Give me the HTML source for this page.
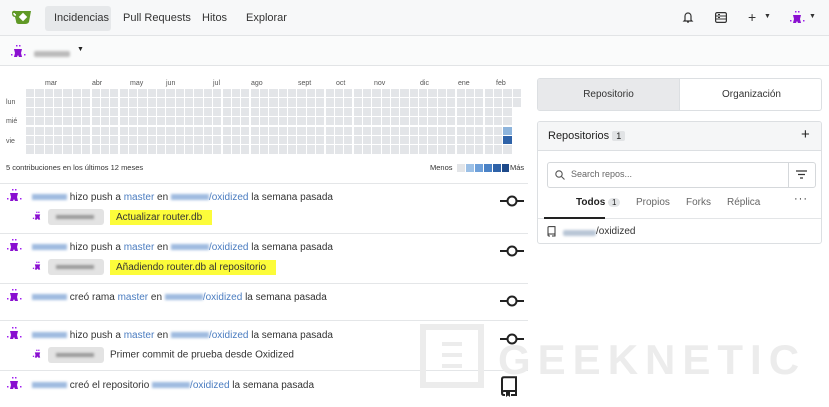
<!DOCTYPE html>
<html><head><meta charset="utf-8">
<style>
*{box-sizing:border-box;margin:0;padding:0}
body{width:829px;height:407px;overflow:hidden;background:#fff;font-family:"Liberation Sans",sans-serif;font-size:11px;color:#222;position:relative}
.nav{position:absolute;left:0;top:0;width:829px;height:36px;background:#f7f8f9;border-bottom:1px solid #e2e4e6}
.nav .it{position:absolute;top:6px;height:25px;line-height:25px;font-size:11px;color:#333;padding:0 9px}
.bar2{position:absolute;left:0;top:36px;width:829px;height:30px;background:#fafbfb;border-bottom:1px solid #e2e4e6}
.blur{display:inline-block;background:#b9c6d6;height:6px;filter:blur(1.3px);vertical-align:middle;border-radius:2px}
.blurb{display:inline-block;background:#9fbbe0;height:6px;filter:blur(1.3px);vertical-align:middle}
.abs{position:absolute}
.lbl{position:absolute;font-size:7px;color:#555}
.row{position:absolute;left:0;width:528px;border-top:1px solid #e4e6e8}
.t{position:absolute;font-size:10px;color:#333;white-space:nowrap}
.a{color:#4a7cc0}
.hl{background:#fcfc3a;padding:2px 10px 2px 6px}
.sha{display:inline-block;width:56px;height:16px;background:#e3e3e3;border-radius:3px;vertical-align:middle;margin-right:6px;position:relative}
.sha:after{content:"";position:absolute;left:8px;top:6px;width:38px;height:4px;background:#999;filter:blur(1.2px)}
.av{position:absolute;width:14px;height:12px}
</style></head><body>
<div class="nav">
 <svg class="abs" style="left:11px;top:9px" width="22" height="16" viewBox="0 0 22 16"><path d="M1 4 Q1 1 5 2 L20 2 L18 13 Q17 15 14 15 L8 15 Q5 15 5 12 L4 8 Q1 8 1 4Z" fill="#609926"/><path d="M3 4 Q3 6 5 6" stroke="#fff" fill="none" stroke-width="1.5"/><rect x="9" y="5" width="6" height="6" transform="rotate(45 12 8)" fill="#fff"/></svg>
 <div class="it" style="left:45px;background:#e6e8ea;border-radius:3px;width:66px">Incidencias</div>
 <div class="it" style="left:114px">Pull Requests</div>
 <div class="it" style="left:193px">Hitos</div>
 <div class="it" style="left:237px">Explorar</div>
 <svg class="abs" style="left:682px;top:11px" width="12" height="13" viewBox="0 0 12 13"><path d="M3 9V5a3 3 0 016 0v4l1 1H2z M5 11h2" stroke="#333" fill="none" stroke-width="1.2"/></svg>
 <svg class="abs" style="left:715px;top:12px" width="12" height="11" viewBox="0 0 12 11"><rect x="0.6" y="0.6" width="10.8" height="9.8" rx="1.5" stroke="#333" fill="none" stroke-width="1.2"/><path d="M1 4h10M1 7h10M3 2.5h2M3 5.5h2" stroke="#333"/></svg>
 <div class="abs" style="left:748px;top:9px;font-size:14px;color:#333">+</div>
 <div class="abs" style="left:764px;top:13px;font-size:7px;color:#333">▼</div>
 <svg class="abs" style="left:789px;top:10px" width="16" height="15" viewBox="0 0 16 15"><rect x="6" y="1" width="1.5" height="1.5" fill="#a020f0"/><rect x="9" y="1" width="1.5" height="1.5" fill="#a020f0"/><path d="M4 5h8l-1 4 1 4H9l-1-2-1 2H4l1-4z" fill="#8a10d0"/><rect x="1" y="10" width="1.5" height="1.5" fill="#a020f0"/><rect x="14" y="10" width="1.5" height="1.5" fill="#a020f0"/></svg>
 <div class="abs" style="left:809px;top:13px;font-size:7px;color:#333">▼</div>
</div>
<div class="bar2">
 <svg class="abs" style="left:10px;top:8px" width="16" height="15" viewBox="0 0 16 15"><rect x="6" y="1" width="1.5" height="1.5" fill="#a020f0"/><rect x="9" y="1" width="1.5" height="1.5" fill="#a020f0"/><path d="M4 5h8l-1 4 1 4H9l-1-2-1 2H4l1-4z" fill="#8a10d0"/><rect x="1" y="10" width="1.5" height="1.5" fill="#a020f0"/><rect x="14" y="10" width="1.5" height="1.5" fill="#a020f0"/></svg>
 <span class="blur abs" style="left:34px;top:15px;width:36px;background:#bbb"></span>
 <div class="abs" style="left:77px;top:10px;font-size:7px">▼</div>
</div>

<div class="lbl" style="left:45px;top:80px">mar</div><div class="lbl" style="left:92px;top:80px">abr</div><div class="lbl" style="left:130px;top:80px">may</div><div class="lbl" style="left:166px;top:80px">jun</div><div class="lbl" style="left:213px;top:80px">jul</div><div class="lbl" style="left:251px;top:80px">ago</div><div class="lbl" style="left:298px;top:80px">sept</div><div class="lbl" style="left:336px;top:80px">oct</div><div class="lbl" style="left:374px;top:80px">nov</div><div class="lbl" style="left:420px;top:80px">dic</div><div class="lbl" style="left:458px;top:80px">ene</div><div class="lbl" style="left:496px;top:80px">feb</div>
<div class="lbl" style="left:6px;top:99px">lun</div><div class="lbl" style="left:6px;top:118px">mié</div><div class="lbl" style="left:6px;top:138px">vie</div>
<div id="grid" class="abs" style="left:26px;top:89px;width:500px;height:66px"></div>
<div class="abs" style="left:6px;top:163px;font-size:7.5px;color:#333">5 contribuciones en los últimos 12 meses</div>
<div class="abs" style="left:430px;top:163px;font-size:7.5px;color:#333">Menos</div>
<div class="abs" style="left:457px;top:164px;width:52px;height:8px;background:linear-gradient(90deg,#e3e5e8 0 8px,#fff 8px 9px,#9cc0e6 9px 17px,#fff 17px 18px,#6ea0da 18px 26px,#fff 26px 27px,#4a82c6 27px 35px,#fff 35px 36px,#2e62a8 36px 44px,#fff 44px 45px,#1e4a8a 45px 52px)"></div>
<div class="abs" style="left:510px;top:163px;font-size:7.5px;color:#333">Más</div>

<div class="row" style="top:183px"></div><div class="row" style="top:233px"></div><div class="row" style="top:283px"></div><div class="row" style="top:320px"></div><div class="row" style="top:370px"></div>

<!-- watermark -->
<div class="abs" style="left:420px;top:324px;width:64px;height:64px;border:6px solid #ececec"></div>
<div class="abs" style="left:442px;top:342px;width:20px;height:4px;background:#ececec;box-shadow:0 11px 0 #ececec,0 22px 0 #ececec"></div>
<div class="abs" style="left:498px;top:336px;width:320px;overflow:hidden;white-space:nowrap;font-size:42px;color:#ececec;letter-spacing:7px;font-weight:bold">GEEKNETIC</div>

<div id="feed"></div>

<!-- right -->
<div class="abs" style="left:537px;top:78px;width:285px;height:33px;border:1px solid #dcdfe2;border-radius:3px;overflow:hidden">
 <div class="abs" style="left:0;top:0;width:142px;height:33px;background:#e8e9eb;text-align:center;line-height:31px;font-size:10px;color:#333;border-right:1px solid #dcdfe2">Repositorio</div>
 <div class="abs" style="left:142px;top:0;width:143px;height:33px;text-align:center;line-height:31px;font-size:10px;color:#333">Organización</div>
</div>
<div class="abs" style="left:537px;top:121px;width:285px;height:123px;border:1px solid #dcdfe2;border-radius:3px;overflow:hidden">
 <div class="abs" style="left:0;top:0;width:285px;height:29px;background:#f5f6f7;border-bottom:1px solid #dcdfe2"></div>
 <div class="abs" style="left:10px;top:8px;font-size:11px;color:#222">Repositorios <span style="background:#e1e3e5;padding:0 4px;border-radius:2px;font-size:9px">1</span></div>
 <div class="abs" style="left:263px;top:4px;font-size:15px;color:#222">+</div>
 <div class="abs" style="left:9px;top:40px;width:269px;height:26px;border:1px solid #d5d8db;border-radius:3px"></div>
 <div class="abs" style="left:250px;top:40px;width:1px;height:26px;background:#d5d8db"></div>
 <svg class="abs" style="left:17px;top:48px" width="10" height="10" viewBox="0 0 10 10"><circle cx="4" cy="4" r="3.2" stroke="#555" fill="none" stroke-width="1.1"/><path d="M6.5 6.5L9.5 9.5" stroke="#555" stroke-width="1.1"/></svg>
 <div class="abs" style="left:33px;top:47px;font-size:9px;color:#666">Search repos...</div>
 <svg class="abs" style="left:258px;top:48px" width="11" height="9" viewBox="0 0 11 9"><path d="M0 1h11M2 4.5h7M4 8h3" stroke="#333" stroke-width="1.2"/></svg>
 <div class="abs" style="left:38px;top:75px;font-size:10px;color:#222;font-weight:bold">Todos <span style="background:#e3e5e7;border-radius:7px;padding:0 4px;font-size:8px;font-weight:normal">1</span></div>
 <div class="abs" style="left:98px;top:75px;font-size:10px;color:#666">Propios</div>
 <div class="abs" style="left:148px;top:75px;font-size:10px;color:#666">Forks</div>
 <div class="abs" style="left:189px;top:75px;font-size:10px;color:#666">Réplica</div>
 <div class="abs" style="left:256px;top:71px;font-size:11px;color:#222;letter-spacing:1px">···</div>
 <div class="abs" style="left:0;top:96px;width:285px;height:1px;background:#e3e5e7"></div>
 <div class="abs" style="left:6px;top:95px;width:61px;height:2px;background:#222"></div>
 <svg class="abs" style="left:9px;top:104px" width="9" height="11" viewBox="0 0 9 11"><path d="M1 9V1.5Q1 0.6 2 0.6H8V8H2Q1 8 1 9Q1 10 2 10H3M5 10H8V8" stroke="#333" fill="none" stroke-width="1"/></svg>
 <span class="blur abs" style="left:25px;top:108px;width:33px"></span>
 <div class="abs" style="left:58px;top:104px;font-size:10px;color:#333">/oxidized</div>
</div>

<script>
var g=document.getElementById('grid'),h='';
for(var c=0;c<53;c++)for(var r=0;r<7;r++){
 if(c==52&&r>1)continue;
 var col='#e3e5e8';
 if(c==51&&r==4)col='#8db4dc';
 if(c==51&&r==5)col='#2e62a8';
 h+='<div style="position:absolute;left:'+(c*9.36)+'px;top:'+(r*9.4)+'px;width:8.2px;height:8.2px;background:'+col+'"></div>';
}
g.innerHTML=h;
var av='<svg width="16" height="15" viewBox="0 0 16 15"><rect x="6" y="1" width="1.5" height="1.5" fill="#a020f0"/><rect x="9" y="1" width="1.5" height="1.5" fill="#a020f0"/><path d="M4 5h8l-1 4 1 4H9l-1-2-1 2H4l1-4z" fill="#8a10d0"/><rect x="1" y="10" width="1.5" height="1.5" fill="#a020f0"/><rect x="14" y="10" width="1.5" height="1.5" fill="#a020f0"/></svg>';
var sav='<svg width="11" height="10" viewBox="0 0 16 15"><rect x="6" y="1" width="2" height="2" fill="#a020f0"/><rect x="9" y="1" width="2" height="2" fill="#a020f0"/><path d="M4 5h8l-1 4 1 4H9l-1-2-1 2H4l1-4z" fill="#8a10d0"/><rect x="1" y="10" width="2" height="2" fill="#a020f0"/></svg>';
var commit='<svg width="24" height="12" viewBox="0 0 24 12"><path d="M0 6h7M17 6h7" stroke="#222" stroke-width="2"/><circle cx="12" cy="6" r="4.5" stroke="#222" stroke-width="2" fill="none"/></svg>';
var repo='<svg width="18" height="22" viewBox="0 0 18 22"><path d="M2 17V3Q2 1.2 4 1.2H16V15H4Q2 15 2 17Q2 19 4 19H5M11 19H16V15" stroke="#222" fill="none" stroke-width="2"/><path d="M6 16V21L8 19.5L10 21V16" fill="#222"/></svg>';
var items=[
 [192,'hizo push a <span class="a">master</span> en ',' la semana pasada','<span class="hl">Actualizar router.db</span>',commit],
 [242,'hizo push a <span class="a">master</span> en ',' la semana pasada','<span class="hl">Añadiendo router.db al repositorio</span>',commit],
 [292,'creó rama <span class="a">master</span> en ',' la semana pasada',null,commit],
 [330,'hizo push a <span class="a">master</span> en ',' la semana pasada','Primer commit de prueba desde Oxidized',commit],
 [380,'creó el repositorio ',' la semana pasada',null,repo]];
var f='';
items.forEach(function(it){
 var y=it[0];
 f+='<div class="av" style="left:6px;top:'+(y-4)+'px">'+av+'</div>';
 f+='<div class="t" style="left:32px;top:'+y+'px"><span class="blurb" style="width:35px"></span> '+it[1]+'<span class="blurb" style="width:38px"></span><span class="a">/oxidized</span>'+it[2]+'</div>';
 if(it[3]){f+='<div class="av" style="left:32px;top:'+(y+19)+'px">'+sav+'</div>';
 f+='<div class="t" style="left:48px;top:'+(y+17)+'px"><span class="sha"></span>'+it[3]+'</div>';}
 f+='<div class="abs" style="left:500px;top:'+(it[4]==repo?y-4:y+3)+'px">'+it[4]+'</div>';
});
document.getElementById('feed').innerHTML=f;
</script>
</body></html>
